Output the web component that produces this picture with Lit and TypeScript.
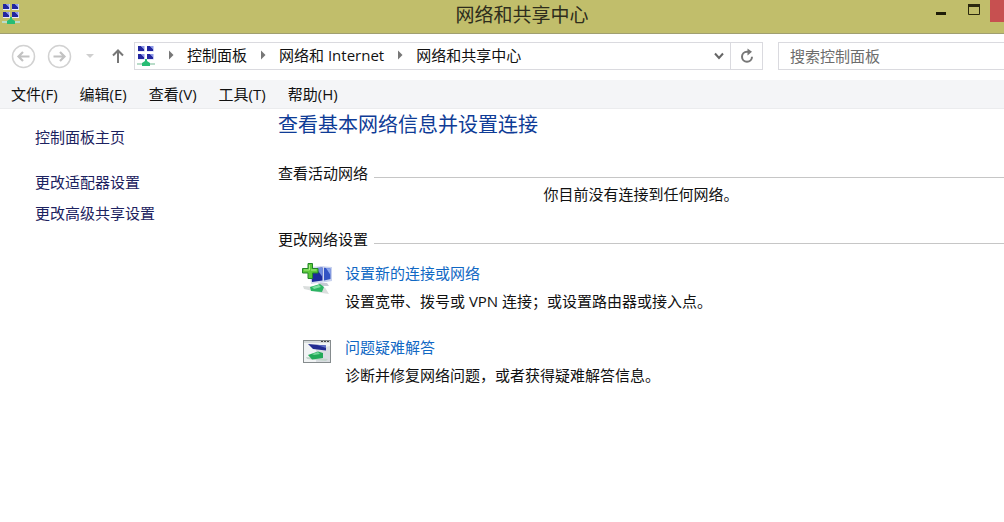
import { LitElement, html, css, svg } from "lit";
import { customElement } from "lit/decorators.js";

const monitor = (x: number, y: number) => svg`
  <path d="M${x} ${y}h7v6h-7z" fill="#c5cbf2"/>
  <path d="M${x} ${y}h3l3 3v2h-6z" fill="#2226a0"/>
  <path d="M${x + 3} ${y}h3v3z" fill="#8d9aea"/>
  <path d="M${x} ${y + 5}h7v1h-7z" fill="#e8eafa"/>`;

const networkGlyph = svg`
  ${monitor(1, 0)}${monitor(10, 0)}${monitor(1, 8)}${monitor(10, 8)}
  <rect x="0" y="17" width="18" height="2" fill="#b9dcc9"/>
  <path d="M8 13h2v2l3 2v3H5v-3l3-2z" fill="#27bd74"/>`;

@customElement("app-root")
export class AppRoot extends LitElement {
  static styles = css`
    :host {
      display: block;
      min-height: 100vh;
      background: #fff;
      color: #111;
      font: 15px/20px "Open Sans", "Noto Sans CJK SC", sans-serif;
      overflow-x: hidden;
    }
    * { box-sizing: border-box; }
    svg { display: block; flex: none; }
    a { color: inherit; text-decoration: none; }
    a:hover { text-decoration: underline; }
    button {
      border: 0;
      padding: 0;
      background: none;
      color: inherit;
      font: inherit;
      display: flex;
      align-items: center;
      justify-content: center;
    }
    ul { list-style: none; margin: 0; padding: 0; }

    .titlebar {
      display: grid;
      grid-template-columns: 118px 1fr 78px;
      height: 34px;
      background: #c1be6b;
      border-bottom: 1px solid #a09f70;
    }
    .app-icon { padding: 4px 2px; }
    .title {
      margin: 0;
      text-align: center;
      font-size: 19px;
      line-height: 30px;
      font-weight: 400;
      color: #2e2d1c;
    }
    .controls { display: flex; align-items: flex-start; }
    .control { flex: 1; height: 22px; }
    .close { flex: 0 0 14px; background: #c75050; }

    .nav {
      display: flex;
      align-items: center;
      height: 46px;
      padding: 0 0 2px 11px;
    }
    .round { width: 25px; height: 25px; margin-right: 11px; }
    .recent { width: 14px; height: 25px; }
    .up { width: 28px; height: 25px; margin: 0 2px 0 7px; }
    .address {
      flex: 1;
      display: flex;
      height: 28px;
      border: 1px solid #dadadf;
    }
    .crumbs {
      flex: 1;
      display: flex;
      align-items: center;
      padding-left: 2px;
      white-space: nowrap;
    }
    .crumbs ul { display: flex; padding-bottom: 2px; }
    .crumbs li { display: flex; align-items: center; }
    .sep { margin: 0 13px; }
    .drop { width: 22px; }
    .refresh { width: 32px; border-left: 1px solid #dadadf; }
    .search {
      width: 226px;
      height: 28px;
      margin-left: 15px;
      padding: 0 11px;
      border: 1px solid #dadadf;
      border-right: 0;
      border-radius: 0;
      font: inherit;
      background: #fff;
      outline: 0;
    }
    .search::placeholder { color: #6d6d6d; opacity: 1; }

    .menu {
      display: flex;
      gap: 22px;
      height: 29px;
      padding-left: 11px;
      background: #f4f5f7;
      border-bottom: 1px solid #ebecee;
    }

    .body {
      display: grid;
      grid-template-columns: 278px 1fr;
    }
    .side {
      padding: 18px 0 0 35px;
      color: #1c2260;
    }
    .tasks { display: grid; gap: 11px; margin-top: 25px; }

    .heading {
      margin: 0 0 22px;
      font-size: 20px;
      line-height: 32px;
      font-weight: 400;
      color: #0f3c96;
    }
    .legend {
      display: flex;
      align-items: flex-end;
      gap: 6px;
      margin: 0;
      font-size: 15px;
      font-weight: 400;
    }
    .legend::after {
      content: "";
      flex: 1;
      border-bottom: 1px solid #c6c6c6;
      margin-bottom: 5px;
    }
    .status { margin: 0 0 24px; text-align: center; line-height: 22px; }
    .options { display: grid; gap: 26px; padding: 14px 0 0 24px; }
    .option { display: flex; gap: 12px; }
    .option p { margin: 8px 0 0; }
    .option a { color: #1068c4; }
  `;

  private sep = html`<svg class="sep" width="6" height="10" viewBox="0 0 6 10" aria-hidden="true">
    <path d="M1 0.5L5.5 5L1 9.5z" fill="#777"/></svg>`;

  private menus = ["文件(F)", "编辑(E)", "查看(V)", "工具(T)", "帮助(H)"];
  private crumbs = ["控制面板", "网络和 Internet", "网络和共享中心"];

  render() {
    return html`
      <header class="titlebar">
        <div class="app-icon"><svg width="18" height="20" viewBox="0 0 18 20" aria-hidden="true">${networkGlyph}</svg></div>
        <h1 class="title">网络和共享中心</h1>
        <div class="controls">
          <button class="control" aria-label="最小化">
            <svg width="12" height="20" viewBox="0 0 12 20"><rect x="0" y="11" width="10" height="3" fill="#1f1d08"/></svg>
          </button>
          <button class="control" aria-label="最大化">
            <svg width="14" height="20" viewBox="0 0 14 20"><path d="M1.5 4v9.5h11V4" fill="none" stroke="#2b290e"/><rect x="1" y="3" width="12" height="3" fill="#2b290e"/></svg>
          </button>
          <button class="control close" aria-label="关闭"></button>
        </div>
      </header>

      <nav class="nav">
        <button class="round" aria-label="后退">
          <svg width="25" height="25" viewBox="0 0 25 25" fill="none"><circle cx="12.5" cy="12.5" r="11" stroke="#d2d2d2" stroke-width="1.5"/><path d="M18.500 12.500H7.500M12 8L7.500 12.500L12 17" stroke="#c2c2c2" stroke-width="2.200"/></svg>
        </button>
        <button class="round" aria-label="前进">
          <svg width="25" height="25" viewBox="0 0 25 25" fill="none"><circle cx="12.5" cy="12.5" r="11" stroke="#d2d2d2" stroke-width="1.5"/><path d="M6.500 12.500H17.500M13 8L17.500 12.500L13 17" stroke="#c2c2c2" stroke-width="2.200"/></svg>
        </button>
        <button class="recent" aria-label="最近浏览的位置">
          <svg width="10" height="6" viewBox="0 0 10 6"><path d="M1 1h8L5 5z" fill="#cfcfcf"/></svg>
        </button>
        <button class="up" aria-label="向上">
          <svg width="14" height="16" viewBox="0 0 14 16" fill="none" stroke="#777" stroke-width="2"><path d="M7 15V2.500M2 7.500L7 2.500L12 7.500"/></svg>
        </button>
        <div class="address">
          <div class="crumbs">
            <svg width="18" height="20" viewBox="0 0 18 20" aria-hidden="true">${networkGlyph}</svg>
            <ul>${this.crumbs.map((c) => html`<li>${this.sep}<a href="#">${c}</a></li>`)}</ul>
          </div>
          <button class="drop" aria-label="以前的位置">
            <svg width="10" height="8" viewBox="0 0 10 8" fill="none" stroke="#666" stroke-width="2"><path d="M1 1.500L5 6L9 1.500"/></svg>
          </button>
          <button class="refresh" aria-label="刷新">
            <svg width="14" height="16" viewBox="0 0 14 16" fill="none"><path d="M8 3.800H7A5 5 0 1 0 12 8.800" stroke="#777" stroke-width="2"/><path d="M7.500 0.500L12 3.800L7.500 7.500z" fill="#777"/></svg>
          </button>
        </div>
        <input class="search" type="search" placeholder="搜索控制面板" aria-label="搜索控制面板" />
      </nav>

      <div class="menu">${this.menus.map((m) => html`<button>${m}</button>`)}</div>

      <div class="body">
        <aside class="side">
          <a href="#">控制面板主页</a>
          <ul class="tasks">
            <li><a href="#">更改适配器设置</a></li>
            <li><a href="#">更改高级共享设置</a></li>
          </ul>
        </aside>
        <main>
          <h2 class="heading">查看基本网络信息并设置连接</h2>
          <h3 class="legend">查看活动网络</h3>
          <p class="status">你目前没有连接到任何网络。</p>
          <h3 class="legend">更改网络设置</h3>
          <div class="options">
            <section class="option">
              <svg width="31" height="32" viewBox="0 0 31 32" aria-hidden="true">
                <path d="M18 3L30 4V18L18 20z" fill="#c9d2ee"/>
                <path d="M20 4.500L28.500 5.500V16L20 18z" fill="#3454c4"/>
                <path d="M24 5L28.500 5.500V12z" fill="#8ba6ee"/>
                <path d="M7 4L22 3V19L9 21z" fill="#d4daf0"/>
                <path d="M9 5.500L20.500 4.500V17.500L10 19z" fill="#1c2a9c"/>
                <path d="M14 5L20.500 4.500V14z" fill="#6f8be0"/>
                <path d="M16 20h9l2 3h-9z" fill="#c6cad4"/>
                <path d="M1 23L23 24.500L27 31L20 30L2 26z" fill="#dadedd"/>
                <path d="M8 24L18 21L22 24L20 29L9 28z" fill="#2bb463"/>
                <path d="M10 24L17 22L19 24L12 26z" fill="#7ee0a2"/>
                <path d="M6 0.500h4.500v5H16v4.500H10.500v5.500H6V10H0.500V5.500H6z" fill="#5cc83a" stroke="#23852a"/>
                <path d="M7.500 2v5H2M9 7h5.500" fill="none" stroke="#a8ee86"/>
              </svg>
              <div>
                <a href="#">设置新的连接或网络</a>
                <p>设置宽带、拨号或 VPN 连接；或设置路由器或接入点。</p>
              </div>
            </section>
            <section class="option">
              <svg width="31" height="30" viewBox="0 0 31 30" aria-hidden="true">
                <rect x="1.500" y="3.500" width="27" height="22" fill="#f1f3f4" stroke="#858b8d"/>
                <path d="M2 4h26v2H2z" fill="#d6dadb"/>
                <path d="M19 4h2v1h-2zM22 4h2v1h-2zM25 4h2v1h-2z" fill="#444"/>
                <path d="M14 12L28 9V25H14z" fill="#d9dde1"/>
                <path d="M6 7L24 8.500V13.500L11 12z" fill="#222b91"/>
                <path d="M15 8L24 8.500V11z" fill="#6274c9"/>
                <path d="M4 20L26 22L24 24L5 22z" fill="#c2d4ca"/>
                <path d="M6 18L16 14.500L21 16V21L10 22.500z" fill="#22a957"/>
                <path d="M10 17L16 15L18 17L12 18z" fill="#72d697"/>
              </svg>
              <div>
                <a href="#">问题疑难解答</a>
                <p>诊断并修复网络问题，或者获得疑难解答信息。</p>
              </div>
            </section>
          </div>
        </main>
      </div>
    `;
  }
}
